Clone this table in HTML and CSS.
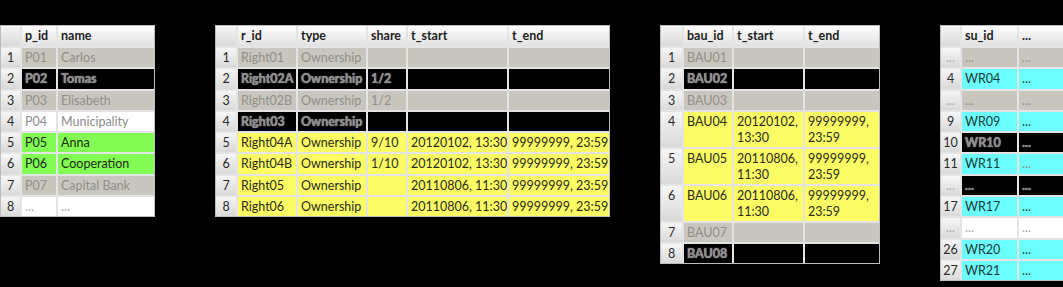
FILE: index.html
```html
<!DOCTYPE html>
<html>
<head>
<meta charset="utf-8">
<link rel="stylesheet" href="styles.css">
</head>
<body>
<div class="canvas">
  <div class="sheet t1">
    <div class="h idx"></div><div class="h">p_id</div><div class="h">name</div>
    <div class="idx">1</div><div class="c gray">P01</div><div class="c gray">Carlos</div>
    <div class="idx">2</div><div class="c blk">P02</div><div class="c blk">Tomas</div>
    <div class="idx">3</div><div class="c gray">P03</div><div class="c gray">Elisabeth</div>
    <div class="idx">4</div><div class="c wht">P04</div><div class="c wht">Municipality</div>
    <div class="idx">5</div><div class="c grn">P05</div><div class="c grn">Anna</div>
    <div class="idx">6</div><div class="c grn">P06</div><div class="c grn">Cooperation</div>
    <div class="idx">7</div><div class="c gray">P07</div><div class="c gray">Capital Bank</div>
    <div class="idx">8</div><div class="c wht dim">...</div><div class="c wht dim">...</div>
  </div>

  <div class="sheet t2">
    <div class="h idx"></div><div class="h">r_id</div><div class="h">type</div><div class="h">share</div><div class="h">t_start</div><div class="h">t_end</div>
    <div class="idx">1</div><div class="c gray">Right01</div><div class="c gray">Ownership</div><div class="c gray"></div><div class="c gray"></div><div class="c gray"></div>
    <div class="idx">2</div><div class="c blk">Right02A</div><div class="c blk">Ownership</div><div class="c blk">1/2</div><div class="c blk"></div><div class="c blk"></div>
    <div class="idx">3</div><div class="c gray">Right02B</div><div class="c gray">Ownership</div><div class="c gray">1/2</div><div class="c gray"></div><div class="c gray"></div>
    <div class="idx">4</div><div class="c blk">Right03</div><div class="c blk">Ownership</div><div class="c blk"></div><div class="c blk"></div><div class="c blk"></div>
    <div class="idx">5</div><div class="c yel">Right04A</div><div class="c yel">Ownership</div><div class="c yel">9/10</div><div class="c yel">20120102, 13:30</div><div class="c yel">99999999, 23:59</div>
    <div class="idx">6</div><div class="c yel">Right04B</div><div class="c yel">Ownership</div><div class="c yel">1/10</div><div class="c yel">20120102, 13:30</div><div class="c yel">99999999, 23:59</div>
    <div class="idx">7</div><div class="c yel">Right05</div><div class="c yel">Ownership</div><div class="c yel"></div><div class="c yel">20110806, 11:30</div><div class="c yel">99999999, 23:59</div>
    <div class="idx">8</div><div class="c yel">Right06</div><div class="c yel">Ownership</div><div class="c yel"></div><div class="c yel">20110806, 11:30</div><div class="c yel">99999999, 23:59</div>
  </div>

  <div class="sheet t3">
    <div class="h idx"></div><div class="h">bau_id</div><div class="h">t_start</div><div class="h">t_end</div>
    <div class="idx">1</div><div class="c gray">BAU01</div><div class="c gray"></div><div class="c gray"></div>
    <div class="idx">2</div><div class="c blk">BAU02</div><div class="c blk"></div><div class="c blk"></div>
    <div class="idx">3</div><div class="c gray">BAU03</div><div class="c gray"></div><div class="c gray"></div>
    <div class="idx">4</div><div class="c yel">BAU04</div><div class="c yel">20120102,<br>13:30</div><div class="c yel">99999999,<br>23:59</div>
    <div class="idx">5</div><div class="c yel">BAU05</div><div class="c yel">20110806,<br>11:30</div><div class="c yel">99999999,<br>23:59</div>
    <div class="idx">6</div><div class="c yel">BAU06</div><div class="c yel">20110806,<br>11:30</div><div class="c yel">99999999,<br>23:59</div>
    <div class="idx">7</div><div class="c gray">BAU07</div><div class="c gray"></div><div class="c gray"></div>
    <div class="idx">8</div><div class="c blk">BAU08</div><div class="c blk"></div><div class="c blk"></div>
  </div>

  <div class="sheet t4">
    <div class="h idx"></div><div class="h">su_id</div><div class="h">...</div>
    <div class="idx dim">...</div><div class="c gray">...</div><div class="c gray">...</div>
    <div class="idx">4</div><div class="c cyn">WR04</div><div class="c cyn">...</div>
    <div class="idx dim">...</div><div class="c gray">...</div><div class="c gray">...</div>
    <div class="idx">9</div><div class="c cyn">WR09</div><div class="c cyn">...</div>
    <div class="idx">10</div><div class="c blk">WR10</div><div class="c blk">...</div>
    <div class="idx">11</div><div class="c cyn">WR11</div><div class="c cyn dim">...</div>
    <div class="idx dim">...</div><div class="c blk">...</div><div class="c blk">...</div>
    <div class="idx">17</div><div class="c cyn">WR17</div><div class="c cyn">...</div>
    <div class="idx dim">...</div><div class="c wht dim">...</div><div class="c wht dim">...</div>
    <div class="idx">26</div><div class="c cyn">WR20</div><div class="c cyn">...</div>
    <div class="idx">27</div><div class="c cyn">WR21</div><div class="c cyn">...</div>
  </div>
</div>
</body>
</html>
```
FILE: styles.css
```css
html, body {
  margin: 0;
  padding: 0;
  background: #000;
  overflow: hidden;
}
.canvas {
  display: flex;
  align-items: flex-start;
  padding-top: 25px;
  width: 1063px;
  height: 287px;
  box-sizing: border-box;
  overflow: hidden;
  font-family: Lato, "Open Sans", sans-serif;
  font-size: 12.5px;
  line-height: 16px;
}
.sheet {
  display: grid;
  gap: 2px;
  background: #e4e4e4;
  border: 1px solid #bdbdbd;
  flex: none;
  grid-template-rows: 20px;
  grid-auto-rows: 19.3px;
}
.t1 {
  grid-template-columns: 19px 34px 96px;
}
.t2 {
  margin-left: 60px;
  grid-template-columns: 20px 58px 68px 38px 99px 100px;
}
.t3 {
  margin-left: 50px;
  grid-template-columns: 21px 48px 69px 74px;
  grid-template-rows: 20px 19.3px 19.3px 19.3px 35px 35px 35px 19.3px 19.3px;
}
.t4 {
  margin-left: 60px;
  grid-template-columns: 19px 55px 70px;
}
.sheet > div {
  padding: 2px 3px 0;
  white-space: nowrap;
  overflow: hidden;
}
.h {
  background: linear-gradient(#fcfcfc, #e2e2e2);
  color: #1e1e1e;
  font-weight: 700;
}
.idx {
  background: linear-gradient(#f6f6f6, #d9d9d9);
  color: #2a2a2a;
  text-align: center;
  padding: 2px 0 0 !important;
}
.gray {
  background: #c9c6bf;
  color: #8f8f8c;
}
.blk {
  background: #000;
  color: #8a8a8a;
  font-weight: 700;
  text-shadow: 0 0 1px #e0e0e0;
}
.wht {
  background: #fff;
  color: #8c8c8c;
}
.grn {
  background: #82fd54;
  color: #1c2a18;
}
.yel {
  background: #fcfc64;
  color: #2b2b1e;
}
.cyn {
  background: #6cfdfd;
  color: #173a3a;
}
.dim {
  color: #a8a8a8;
}
.blk.dim, .cyn.dim {
  color: #8a8a8a;
}
```
